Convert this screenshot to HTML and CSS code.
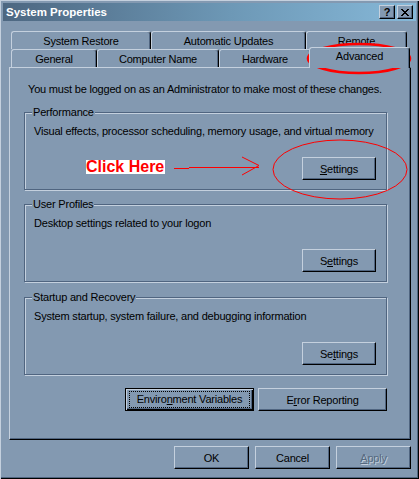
FILE: index.html
```html
<!DOCTYPE html>
<html lang="en">
<head>
    <meta charset="UTF-8">
    <meta name="viewport" content="width=device-width, initial-scale=1.0">
    <title>System Properties</title>
    <link rel="stylesheet" href="styles.css">
</head>
<body>
    <div class="window">
        <div class="titlebar">
            <span class="title">System Properties</span>
            <div class="caption-buttons">
                <span class="cap-btn cap-help">?</span>
                <span class="cap-btn">
                    <svg width="10" height="9" viewBox="0 0 10 9"><path d="M1 1 L8 8 M2 1 L9 8 M8 1 L1 8 M9 1 L2 8" stroke="#000" stroke-width="1" shape-rendering="crispEdges"/></svg>
                </span>
            </div>
        </div>

        <div class="tabs">
            <div class="tab-row">
                <div class="tab tab-restore">System Restore</div>
                <div class="tab tab-updates">Automatic Updates</div>
                <div class="tab tab-remote">Remote</div>
            </div>
            <div class="tab-row">
                <div class="tab tab-general">General</div>
                <div class="tab tab-computer">Computer Name</div>
                <div class="tab tab-hardware">Hardware</div>
                <div class="tab tab-advanced active">Advanced</div>
            </div>
        </div>

        <div class="panel">
            <p class="intro">You must be logged on as an Administrator to make most of these changes.</p>

            <div class="group group-first">
                <span class="group-title">Performance</span>
                <p class="group-text">Visual effects, processor scheduling, memory usage, and virtual memory</p>
                <button class="btn btn-settings"><u>S</u>ettings</button>
            </div>

            <div class="group">
                <span class="group-title">User Profiles</span>
                <p class="group-text">Desktop settings related to your logon</p>
                <button class="btn btn-settings">S<u>e</u>ttings</button>
            </div>

            <div class="group group-last">
                <span class="group-title">Startup and Recovery</span>
                <p class="group-text">System startup, system failure, and debugging information</p>
                <button class="btn btn-settings">Se<u>t</u>tings</button>
            </div>

            <div class="panel-buttons">
                <button class="btn btn-wide btn-default"><span class="focus">Enviro<u>n</u>ment Variables</span></button>
                <button class="btn btn-wide">E<u>r</u>ror Reporting</button>
            </div>
        </div>

        <div class="dialog-buttons">
            <button class="btn btn-dialog">OK</button>
            <button class="btn btn-dialog">Cancel</button>
            <button class="btn btn-dialog disabled"><u>A</u>pply</button>
        </div>

        <!-- red annotations drawn over the dialog -->
        <svg class="marks" width="419" height="479" viewBox="0 0 419 479">
            <ellipse cx="359" cy="58.5" rx="51" ry="14.5" fill="none" stroke="#f00" stroke-width="2.5"/>
            <ellipse cx="340" cy="169.5" rx="67" ry="29.5" fill="none" stroke="#f00" stroke-width="1"/>
            <path d="M174 168.5 H189 M189 167.5 H259" stroke="#f00" stroke-width="1" fill="none"/>
            <path d="M242 157 L259 165.5 L242 175" stroke="#f00" stroke-width="1" fill="none"/>
        </svg>
        <span class="click-here">Click Here</span>
    </div>
</body>
</html>
```

FILE: styles.css
```css
body, html {
    margin: 0;
    padding: 0;
    background-color: #8399b1;
}
.window {
    position: relative;
    box-sizing: border-box;
    width: 419px;
    height: 479px;
    padding: 3px;
    background-color: #8399b1;
    box-shadow: inset 1px 1px #c4d0de, inset -1px -1px #000, inset -2px -2px #506580;
    font-family: "Liberation Sans", Arial, sans-serif;
    font-size: 11px;
    letter-spacing: -0.2px;
    white-space: nowrap;
    color: #000;
}
.titlebar {
    height: 18px;
    display: flex;
    align-items: center;
    justify-content: space-between;
    padding: 0 3px 0 3px;
    background: linear-gradient(to right, #4d6781, #6d98b6 55%, #86b8d8);
}
.title {
    color: #fff;
    font-weight: bold;
    font-size: 11.5px;
    letter-spacing: 0;
}
.caption-buttons {
    display: flex;
    gap: 2px;
}
.cap-btn {
    box-sizing: border-box;
    width: 16px;
    height: 14px;
    display: flex;
    align-items: center;
    justify-content: center;
    background-color: #8399b1;
    border: 1px solid;
    border-color: #c4d0de #000 #000 #c4d0de;
    box-shadow: inset -1px -1px #506580;
}
.cap-help {
    font-weight: bold;
    font-size: 11px;
    line-height: 12px;
}
.tabs {
    margin-top: 10px;
    padding-left: 8px;
}
.tab-row {
    display: flex;
    height: 18px;
}
.tab {
    box-sizing: border-box;
    height: 18px;
    padding-top: 3px;
    line-height: 13px;
    text-align: center;
    background-color: #8399b1;
    border-top: 1px solid #c4d0de;
    border-left: 1px solid #c4d0de;
    border-right: 1px solid #000;
    border-radius: 3px 3px 0 0;
    box-shadow: inset -1px 0 #506580;
}
.tab-restore { width: 140px; }
.tab-updates { width: 155px; }
.tab-remote { width: 101px; }
.tab-general { width: 86px; }
.tab-computer { width: 122px; }
.tab-hardware { width: 92px; }
.tab-advanced { width: 101px; }
.tab.active {
    position: relative;
    z-index: 1;
    height: 21px;
    margin-top: -2px;
    margin-left: -2px;
    padding-top: 2px;
}
.panel {
    box-sizing: border-box;
    width: 402px;
    height: 373px;
    margin-left: 6px;
    padding: 0 23px 0 14px;
    border: 1px solid;
    border-color: #c4d0de #000 #000 #c4d0de;
    box-shadow: inset -1px -1px #506580;
    display: flex;
    flex-direction: column;
}
.intro {
    margin: 15px 0 0 4px;
    line-height: 13px;
}
.group {
    box-sizing: border-box;
    height: 78px;
    margin-top: 14px;
    padding: 0 9px 9px 9px;
    border: 1px solid #506580;
    box-shadow: inset 1px 1px #c4d0de, 1px 1px #c4d0de;
    display: flex;
    flex-direction: column;
}
.group-first {
    margin-top: 16px;
}
.group-last {
    margin-top: 15px;
}
.group-title {
    align-self: flex-start;
    margin: -7px 0 0 -2px;
    padding: 0 1px;
    line-height: 13px;
    background-color: #8399b1;
}
.group-text {
    margin: 6px 0 0 0;
    line-height: 13px;
}
.btn {
    box-sizing: border-box;
    height: 23px;
    padding: 0;
    font-family: "Liberation Sans", Arial, sans-serif;
    font-size: 11px;
    letter-spacing: -0.2px;
    color: #000;
    background-color: #8399b1;
    border: 1px solid;
    border-color: #c4d0de #000 #000 #c4d0de;
    box-shadow: inset -1px -1px #506580;
    border-radius: 0;
}
.btn-settings {
    width: 74px;
    margin-top: auto;
    align-self: flex-end;
    margin-right: 1px;
}
.panel-buttons {
    display: flex;
    justify-content: flex-end;
    gap: 4px;
    margin-top: 13px;
}
.btn-wide {
    width: 129px;
}
.btn-default {
    border: 1px solid #000;
    box-shadow: inset 1px 1px #c4d0de, inset -1px -1px #000, inset -2px -2px #506580;
    display: flex;
    align-items: center;
    justify-content: center;
}
.focus {
    box-sizing: border-box;
    width: 121px;
    height: 17px;
    line-height: 15px;
    border: 1px dotted #000;
}
.dialog-buttons {
    display: flex;
    justify-content: flex-end;
    gap: 6px;
    margin-top: 6px;
    padding-right: 5px;
}
.btn-dialog {
    width: 75px;
}
.disabled {
    color: #55697f;
    text-shadow: 1px 1px #c4d0de;
}
.marks {
    position: absolute;
    top: 0;
    left: 0;
    pointer-events: none;
}
.click-here {
    position: absolute;
    left: 86px;
    top: 160px;
    width: 79px;
    height: 14px;
    line-height: 14px;
    background-color: #fff;
    color: #f00;
    font-weight: bold;
    font-size: 16px;
    letter-spacing: 0;
}
```
